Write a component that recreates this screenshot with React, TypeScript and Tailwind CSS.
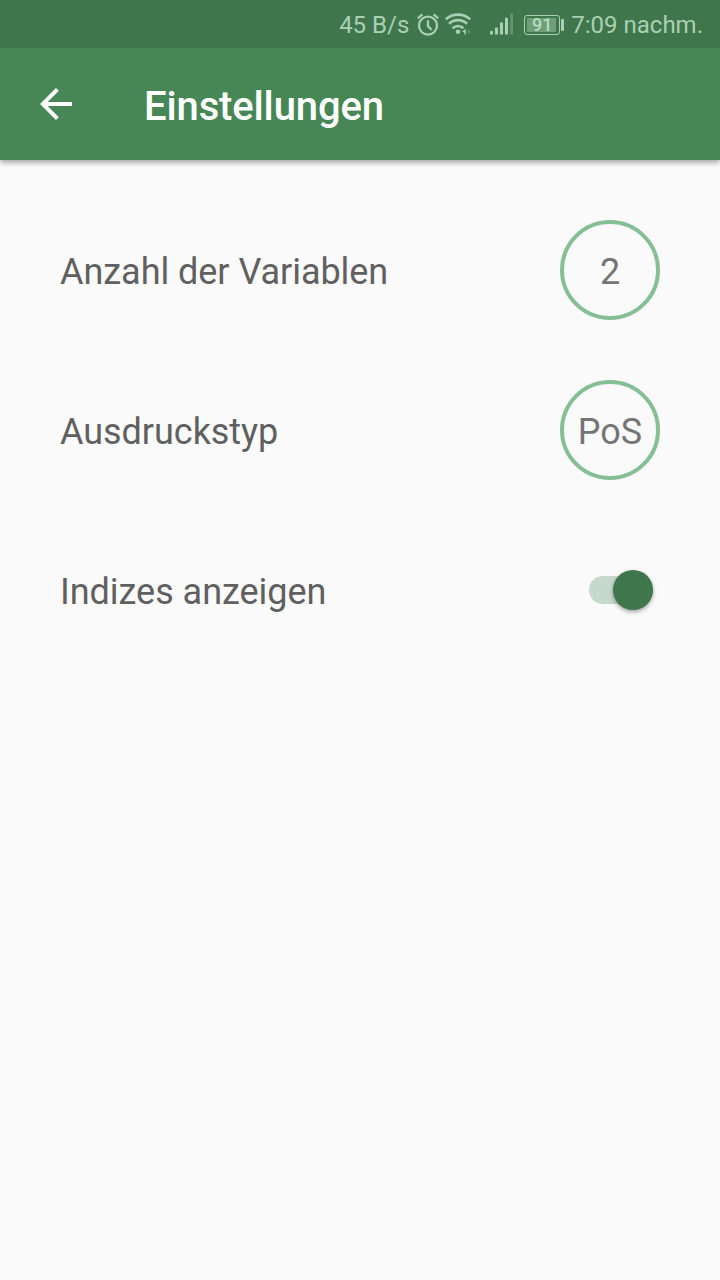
import type { ReactNode } from "react";

// ─── Status bar icons ───────────────────────────────────────

function AlarmIcon() {
  return (
    <svg
      className="ml-2 h-6 w-[22px] shrink-0"
      viewBox="0 0 22 24"
      fill="none"
      stroke="currentColor"
      strokeWidth="2.3"
      aria-hidden="true"
    >
      <circle cx="11" cy="12.6" r="9" />
      <path d="M11 7.2v6l3.6 3.6" />
      <path d="M0.8 5.4L5.4 1.4M21.2 5.4L16.6 1.4" />
    </svg>
  );
}

function WifiIcon() {
  return (
    <svg
      className="ml-[5px] h-6 w-7 shrink-0"
      viewBox="0 0 28 24"
      fill="none"
      stroke="currentColor"
      strokeWidth="2.6"
      aria-hidden="true"
    >
      <path d="M1.8 6.4C8.4 0 19.6 0 26.2 6.4" />
      <path d="M5 10.8C10.2 5.9 17.8 5.9 23 10.8" />
      <path d="M8.6 15.2C11.7 12.3 16.3 12.3 19.4 15.2" />
      <circle cx="14" cy="18.8" r="2.3" fill="currentColor" stroke="none" />
      <path d="M21.8 15.8v5.8h-1.4v-2l-2.4-1.2z" fill="currentColor" stroke="none" />
      <path d="M24.4 16.4v4.8M23.4 18.8h3.2" strokeWidth="1" opacity="0.35" />
    </svg>
  );
}

function SignalIcon() {
  return (
    <svg
      className="ml-[18px] h-6 w-6 shrink-0"
      viewBox="0 0 24 24"
      fill="currentColor"
      aria-hidden="true"
    >
      <rect x="0" y="18" width="3" height="3.6" rx="0.6" />
      <rect x="5" y="14.6" width="3" height="7" rx="0.6" />
      <rect x="10" y="9.6" width="3" height="12" rx="0.6" />
      <rect x="15" y="4.8" width="3" height="16.8" rx="0.6" />
      <rect x="20.2" y="0.6" width="2.8" height="21" rx="0.6" opacity="0.35" />
    </svg>
  );
}

function Battery({ level }: { level: number }) {
  return (
    <div className="ml-2.5 flex shrink-0 items-center pb-px">
      <div className="h-5 w-9 rounded-[3px] border-[1.5px] border-current p-0.5">
        <div className="flex h-full w-[29px] items-center justify-center bg-[#a9d0b3]/45 pl-px text-[18px] leading-none font-medium text-[#b6dcc0]">
          {level}
        </div>
      </div>
      <div className="ml-px h-3 w-[3px] rounded-[1px] bg-current" />
    </div>
  );
}

function StatusBar() {
  return (
    <div className="relative z-10 flex h-12 items-center justify-end bg-[#3f764b] pt-0.5 pr-[17px] text-2xl whitespace-nowrap text-[#a9d0b3]">
      <span>45 B/s</span>
      <AlarmIcon />
      <WifiIcon />
      <SignalIcon />
      <Battery level={91} />
      <span className="ml-[7px]">7:09 nachm.</span>
    </div>
  );
}

// ─── App bar ────────────────────────────────────────────────

function AppBar({ title }: { title: string }) {
  return (
    <header className="flex h-28 items-center bg-[#468755] pl-10 text-white shadow-[0_2px_6px_rgba(0,0,0,0.4)]">
      <button type="button" aria-label="Zurück" className="size-8">
        <svg viewBox="4 4 16 16" className="size-8" fill="currentColor">
          <path d="M20 11H7.83l5.59-5.59L12 4l-8 8 8 8 1.41-1.41L7.83 13H20v-2z" />
        </svg>
      </button>
      <h1 className="ml-[72px] pt-1.5 text-[40px] leading-none font-medium tracking-[-0.14px]">
        {title}
      </h1>
    </header>
  );
}

// ─── Settings ───────────────────────────────────────────────

function SettingRow({ label, children }: { label: string; children: ReactNode }) {
  return (
    <div className="flex h-40 items-center justify-between px-[60px]">
      <span className="pt-1 text-4xl tracking-[-0.04px] text-[#606060]">{label}</span>
      {children}
    </div>
  );
}

function ValueButton({ value }: { value: string }) {
  return (
    <button
      type="button"
      className="flex size-[100px] items-center justify-center rounded-full border-4 border-[#87bf95] pt-1 text-4xl text-[#757575]"
    >
      {value}
    </button>
  );
}

function Toggle() {
  return (
    <button
      type="button"
      role="switch"
      aria-checked="true"
      className="mr-[7px] flex h-7 w-16 items-center justify-end rounded-full bg-[#c7d9cb]"
    >
      <span className="size-10 shrink-0 rounded-full bg-[#3f764b] shadow-[0_2px_4px_rgba(0,0,0,0.35)]" />
    </button>
  );
}

export default function App() {
  return (
    <div className="min-h-screen bg-[#fafafa] font-['Roboto',sans-serif]">
      <StatusBar />
      <AppBar title="Einstellungen" />
      <main className="pt-[30px]">
        <SettingRow label="Anzahl der Variablen">
          <ValueButton value="2" />
        </SettingRow>
        <SettingRow label="Ausdruckstyp">
          <ValueButton value="PoS" />
        </SettingRow>
        <SettingRow label="Indizes anzeigen">
          <Toggle />
        </SettingRow>
      </main>
    </div>
  );
}
